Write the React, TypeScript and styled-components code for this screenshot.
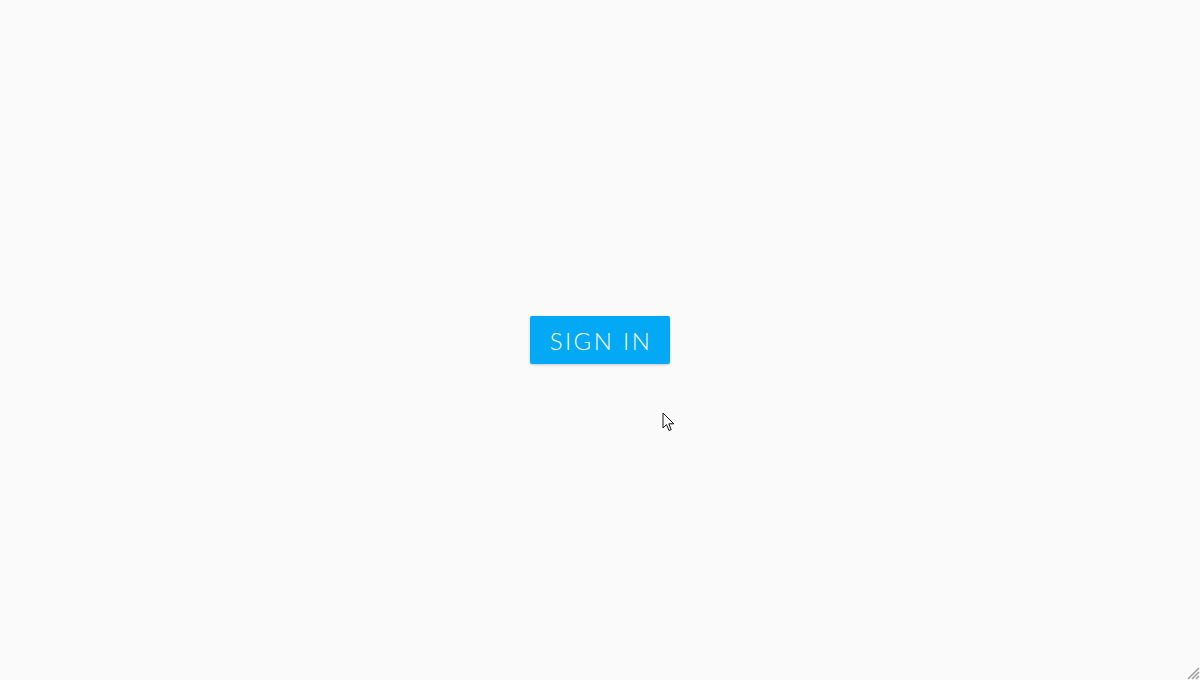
import styled, { createGlobalStyle } from "styled-components";

const GlobalStyle = createGlobalStyle`
  html, body {
    margin: 0;
    padding: 0;
    background: #fafafa;
  }
  body {
    font-family: Lato, "Open Sans", sans-serif;
  }
`;

export default function App() {
  return (
    <>
      <GlobalStyle />
      <SPage>
        <SButton>SIGN IN</SButton>
        <SCursor width="14" height="21" viewBox="0 0 14 21">
          <path
            d="M1 1 L1 16 L4.5 12.5 L7 18.5 L9.2 17.6 L6.8 11.8 L11.8 11.8 Z"
            fill="#fff"
            stroke="#111"
            strokeWidth="1"
            strokeLinejoin="miter"
          />
        </SCursor>
        <SGrip width="14" height="14" viewBox="0 0 14 14">
          <path d="M13 2 L2 13 M13 6 L6 13 M13 10 L10 13" stroke="#a0a0a0" strokeWidth="1.6" />
        </SGrip>
      </SPage>
    </>
  );
}

const SPage = styled.div`
  position: relative;
  width: 1200px;
  height: 680px;
  display: flex;
  align-items: center;
  justify-content: center;
  overflow: hidden;
`;

const SButton = styled.button`
  width: 140px;
  height: 48px;
  background: #03a9f4;
  color: #fff;
  border: none;
  border-radius: 2px;
  font-family: Lato, "Open Sans", sans-serif;
  font-weight: 300;
  font-size: 24px;
  letter-spacing: 2.4px;
  padding: 0 0 0 2px;
  box-shadow: 0 1px 3px rgba(0, 0, 0, 0.2);
  cursor: pointer;
`;

const SCursor = styled.svg`
  position: absolute;
  left: 662px;
  top: 412px;
`;

const SGrip = styled.svg`
  position: absolute;
  right: 0;
  bottom: 0;
`;
